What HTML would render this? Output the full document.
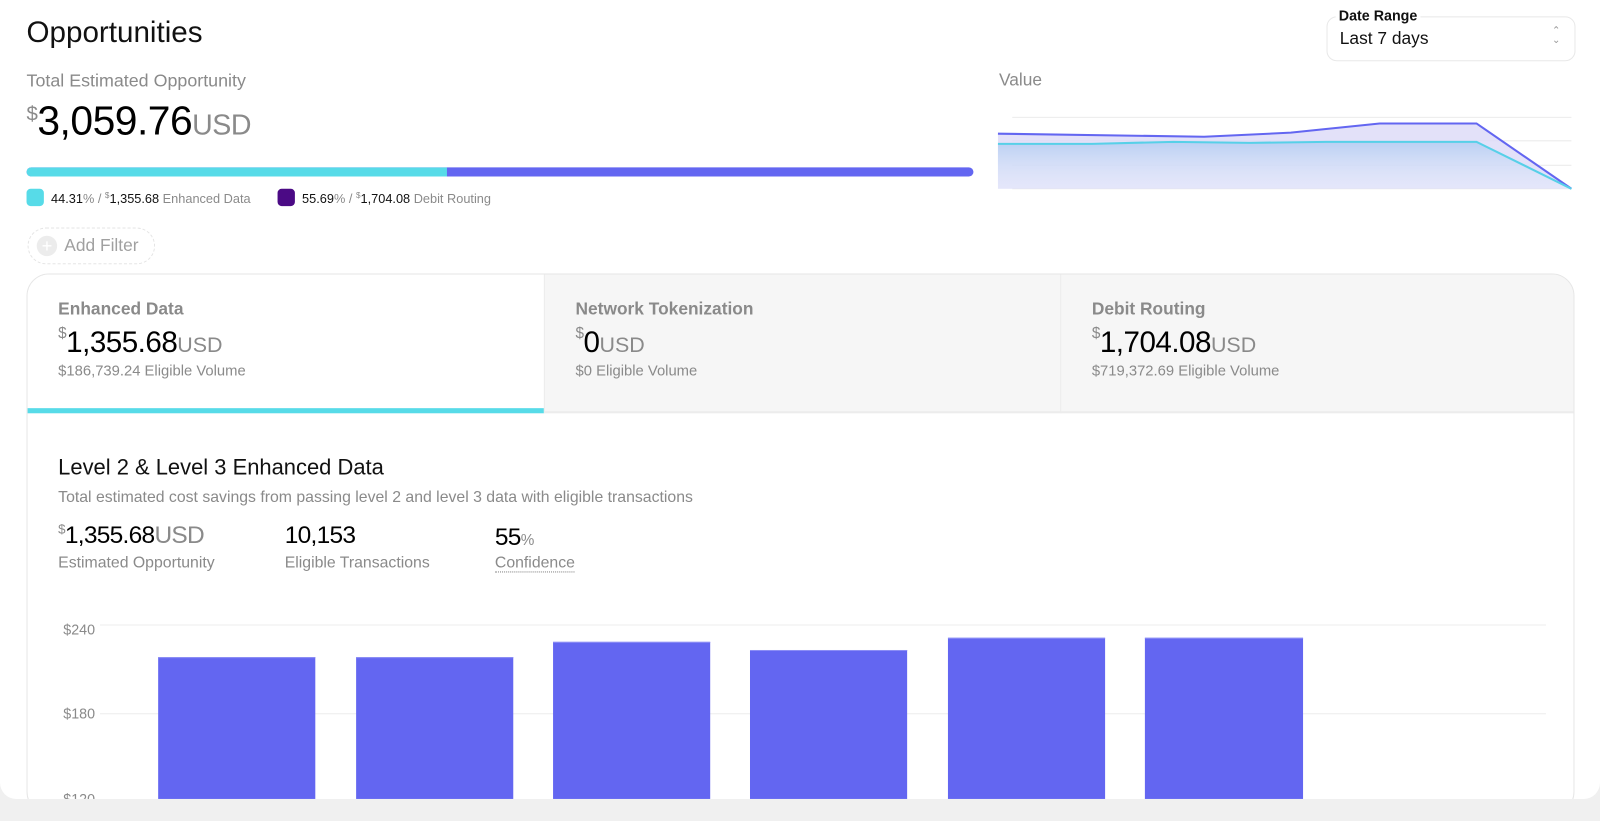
<!DOCTYPE html>
<html><head><meta charset="utf-8"><style>
*{box-sizing:border-box;margin:0;padding:0}
body{width:1600px;height:805px;overflow:hidden;background:#f0f0f0;font-family:"Liberation Sans",sans-serif;position:relative}
.wrap{position:absolute;left:0;top:0;width:1568px;height:789px;transform:scale(1.0204);transform-origin:0 0}
.page{position:absolute;left:0;top:0;width:1568px;height:783px;background:#fff;border-radius:0 0 16px 16px}
.abs{position:absolute;white-space:nowrap}
.g{color:#8a8a8a}
.card{position:absolute;left:26px;top:268px;width:1517px;height:530px;border:1px solid #e6e6e6;border-radius:22px;overflow:hidden;background:#fff}
.tabs{position:absolute;left:0;top:0;width:100%;height:136px;background:#f6f6f6;border-bottom:2px solid #ececec}
.tab{position:absolute;top:0;height:136px;width:506px}
.tab .t{position:absolute;left:30px;top:24px;font-size:17px;color:#8a8a8a;font-weight:bold}
.tab .v{position:absolute;left:30px;top:51px;font-size:29px;color:#000;letter-spacing:-0.5px}
.tab .v sup{font-size:15px;color:#8a8a8a;vertical-align:top;position:relative;top:-2px}
.tab .v span{font-size:21px;color:#8a8a8a;letter-spacing:0}
.tab .e{position:absolute;left:30px;top:87px;font-size:14.5px;color:#8a8a8a}
.bar{position:absolute;background:#6366f1;border-top:1px solid #8b8df5}
</style></head><body>
<div class="wrap">
<div class="page">
<div class="abs" style="left:26px;top:16px;font-size:29px;color:#111">Opportunities</div>
<div class="abs g" style="left:26px;top:69px;font-size:17.5px">Total Estimated Opportunity</div>
<div class="abs" style="left:26px;top:97px;font-size:40px;color:#000;letter-spacing:-0.5px"><span style="font-size:20px;color:#8a8a8a;vertical-align:top;position:relative;top:4px">$</span>3,059.76<span style="font-size:28px;color:#8a8a8a">USD</span></div>
<div class="abs" style="left:26px;top:164px;width:928px;height:9px;border-radius:5px;background:#6366f1;overflow:hidden"><div style="width:412px;height:9px;background:#57dbe8"></div></div>
<div class="abs" style="left:26px;top:185px;width:17px;height:17px;border-radius:4px;background:#57dbe8"></div>
<div class="abs" style="left:50px;top:187px;font-size:12.5px;color:#111">44.31<span class="g">% / <sup style="font-size:8px">$</sup></span>1,355.68 <span class="g">Enhanced Data</span></div>
<div class="abs" style="left:272px;top:185px;width:17px;height:17px;border-radius:4px;background:#4b0a85"></div>
<div class="abs" style="left:296px;top:187px;font-size:12.5px;color:#111">55.69<span class="g">% / <sup style="font-size:8px">$</sup></span>1,704.08 <span class="g">Debit Routing</span></div>
<div class="abs" style="left:27px;top:223px;width:125px;height:36px;border:1px dashed #e4e4e4;border-radius:18px"></div>
<div class="abs" style="left:36px;top:231px;width:20px;height:20px;border-radius:50%;background:#ececec;color:#fff;font-size:18px;line-height:20px;text-align:center">+</div>
<div class="abs" style="left:63px;top:231px;font-size:17px;color:#a0a0a0">Add Filter</div>

<div class="abs" style="left:1300px;top:16px;width:244px;height:44px;border:1px solid #e8e8e8;border-radius:10px;background:#fff"></div>
<div class="abs" style="left:1309px;top:7px;font-size:14px;color:#111;background:#fff;padding:0 3px;font-weight:bold">Date Range</div>
<div class="abs" style="left:1313px;top:28px;font-size:17px;color:#111">Last 7 days</div>
<div class="abs" style="left:1521px;top:26px;font-size:10px;color:#999;line-height:9px">&#8963;<br>&#8964;</div>

<div class="abs g" style="left:979px;top:69px;font-size:17px">Value</div>
<svg class="abs" style="left:0;top:0" width="1568" height="200">
<defs><linearGradient id="gr" x1="0" y1="0" x2="0" y2="1"><stop offset="0" stop-color="#a8c8f0" stop-opacity=".7"/><stop offset="1" stop-color="#e8f2fc" stop-opacity=".3"/></linearGradient></defs>
<g stroke="#ececec" stroke-width="1"><line x1="992" y1="115" x2="1540" y2="115"/><line x1="992" y1="138" x2="1540" y2="138"/><line x1="992" y1="162" x2="1540" y2="162"/><line x1="992" y1="185" x2="1540" y2="185"/></g>
<polygon points="978,131 1180,134 1265,130 1352,121 1447,121 1540,185 978,185" fill="#dcdaf8" opacity=".8"/>
<polygon points="978,141 1070,141 1150,139 1225,140 1300,139 1447,139 1540,185 978,185" fill="url(#gr)"/>
<polyline points="978,131 1180,134 1265,130 1352,121 1447,121 1540,185" fill="none" stroke="#6366f1" stroke-width="2"/>
<polyline points="978,141 1070,141 1150,139 1225,140 1300,139 1447,139 1540,185" fill="none" stroke="#57d0e8" stroke-width="2"/>
</svg>

<div class="card">
<div class="tabs">
<div class="tab" style="left:0;background:#fff;border-bottom:5px solid #57dbe8;height:136px"><div class="t">Enhanced Data</div><div class="v"><sup>$</sup>1,355.68<span>USD</span></div><div class="e">$186,739.24 Eligible Volume</div></div>
<div class="tab" style="left:506px;border-left:1px solid #ececec"><div class="t">Network Tokenization</div><div class="v"><sup>$</sup>0<span>USD</span></div><div class="e">$0 Eligible Volume</div></div>
<div class="tab" style="left:1012px;border-left:1px solid #ececec"><div class="t">Debit Routing</div><div class="v"><sup>$</sup>1,704.08<span>USD</span></div><div class="e">$719,372.69 Eligible Volume</div></div>
</div>
</div>
<div class="abs" style="left:57px;top:446px;font-size:21.5px;color:#111">Level 2 &amp; Level 3 Enhanced Data</div>
<div class="abs g" style="left:57px;top:479px;font-size:15.5px">Total estimated cost savings from passing level 2 and level 3 data with eligible transactions</div>
<div class="abs" style="left:57px;top:511px;font-size:24px;color:#000;letter-spacing:-0.7px"><span style="font-size:13px;color:#8a8a8a;vertical-align:top">$</span>1,355.68<span style="color:#8a8a8a">USD</span></div>
<div class="abs g" style="left:57px;top:543px;font-size:15.5px">Estimated Opportunity</div>
<div class="abs" style="left:279px;top:511px;font-size:24px;color:#000;letter-spacing:-0.7px">10,153</div>
<div class="abs g" style="left:279px;top:543px;font-size:15.5px">Eligible Transactions</div>
<div class="abs" style="left:485px;top:513px;font-size:24px;color:#000;letter-spacing:-0.7px">55<span style="font-size:15px;color:#8a8a8a">%</span></div>
<div class="abs g" style="left:485px;top:543px;font-size:15.5px;border-bottom:1px dotted #8a8a8a;line-height:17px">Confidence</div>

<div class="abs" style="left:98px;top:612px;width:1417px;height:1px;background:#ececec"></div>
<div class="abs" style="left:98px;top:699px;width:1417px;height:1px;background:#ececec"></div>
<div class="abs g" style="left:62px;top:609px;font-size:14px">$240</div>
<div class="abs g" style="left:62px;top:691px;font-size:14px">$180</div>
<div class="abs g" style="left:62px;top:775px;font-size:14px">$120</div>
<div class="bar" style="left:155px;top:644px;width:154px;height:139px"></div>
<div class="bar" style="left:349px;top:644px;width:154px;height:139px"></div>
<div class="bar" style="left:542px;top:629px;width:154px;height:154px"></div>
<div class="bar" style="left:735px;top:637px;width:154px;height:146px"></div>
<div class="bar" style="left:929px;top:625px;width:154px;height:158px"></div>
<div class="bar" style="left:1122px;top:625px;width:155px;height:158px"></div>
</div>
<div class="abs" style="left:0;top:783px;width:1568px;height:22px;background:#f0f0f0"></div>
</div>
</body></html>
